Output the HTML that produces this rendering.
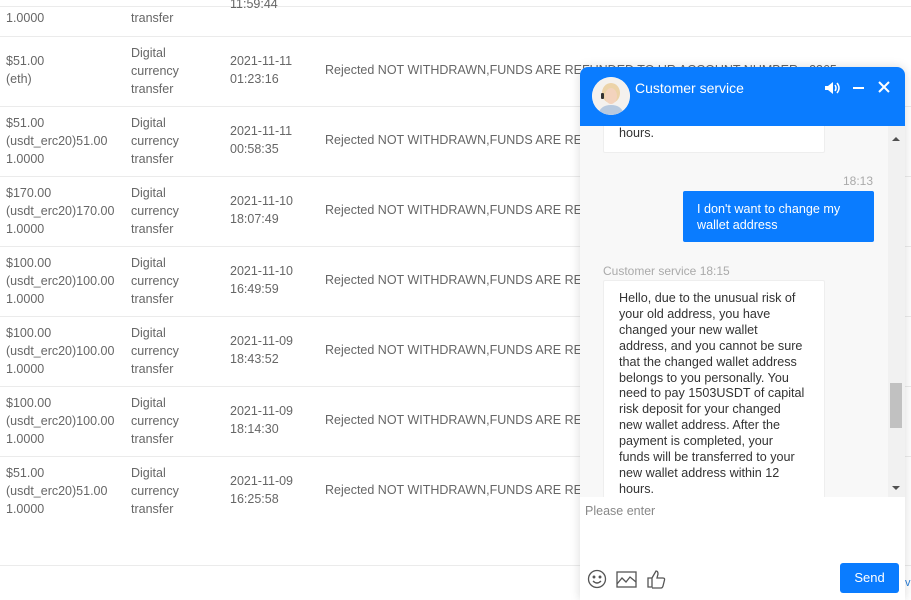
<!DOCTYPE html>
<html><head><meta charset="utf-8"><style>
*{margin:0;padding:0;box-sizing:border-box}
body{width:911px;height:600px;overflow:hidden;background:#fff;font-family:"Liberation Sans",sans-serif;font-size:12.5px;color:#666;position:relative}
.hl{position:absolute;left:0;width:911px;height:1px;background:#ebebeb}
.c{position:absolute;line-height:18px;color:#666;white-space:nowrap}
.chat{position:absolute;left:580px;top:67px;width:325px;height:533px;background:#fff;border-radius:8px 8px 0 0;box-shadow:0 0 10px rgba(0,0,0,.15);overflow:hidden}
.hd{position:absolute;left:0;top:0;width:325px;height:59px;background:#0a7cff}
.body{position:absolute;left:0;top:59px;width:325px;height:371px;background:#f8f8f8;overflow:hidden}
.msg{position:absolute;background:#fff;border:1px solid #eee;border-radius:2px;color:#333;font-size:12.6px;line-height:15.9px;white-space:nowrap}
</style></head><body>
<div class="hl" style="top:6px"></div>
<div class="hl" style="top:36px"></div>
<div class="hl" style="top:106px"></div>
<div class="hl" style="top:176px"></div>
<div class="hl" style="top:246px"></div>
<div class="hl" style="top:316px"></div>
<div class="hl" style="top:386px"></div>
<div class="hl" style="top:456px"></div>
<div class="hl" style="top:565px"></div>

<div class="c" style="left:6px;top:9px">1.0000</div>
<div class="c" style="left:131px;top:9px">transfer</div>
<div class="c" style="left:230px;top:-5px">11:59:44</div>

<div class="c" style="left:6px;top:52px">$51.00<br>(eth)</div>
<div class="c" style="left:131px;top:44px">Digital<br>currency<br>transfer</div>
<div class="c" style="left:230px;top:52px">2021-11-11<br>01:23:16</div>
<div class="c" style="left:325px;top:61px">Rejected NOT WITHDRAWN,FUNDS ARE REFUNDED TO UR ACCOUNT NUMBER - 2365</div>

<div class="c" style="left:6px;top:114px">$51.00<br>(usdt_erc20)51.00<br>1.0000</div>
<div class="c" style="left:131px;top:114px">Digital<br>currency<br>transfer</div>
<div class="c" style="left:230px;top:122px">2021-11-11<br>00:58:35</div>
<div class="c" style="left:325px;top:131px">Rejected NOT WITHDRAWN,FUNDS ARE RE</div>

<div class="c" style="left:6px;top:184px">$170.00<br>(usdt_erc20)170.00<br>1.0000</div>
<div class="c" style="left:131px;top:184px">Digital<br>currency<br>transfer</div>
<div class="c" style="left:230px;top:192px">2021-11-10<br>18:07:49</div>
<div class="c" style="left:325px;top:201px">Rejected NOT WITHDRAWN,FUNDS ARE RE</div>

<div class="c" style="left:6px;top:254px">$100.00<br>(usdt_erc20)100.00<br>1.0000</div>
<div class="c" style="left:131px;top:254px">Digital<br>currency<br>transfer</div>
<div class="c" style="left:230px;top:262px">2021-11-10<br>16:49:59</div>
<div class="c" style="left:325px;top:271px">Rejected NOT WITHDRAWN,FUNDS ARE RE</div>

<div class="c" style="left:6px;top:324px">$100.00<br>(usdt_erc20)100.00<br>1.0000</div>
<div class="c" style="left:131px;top:324px">Digital<br>currency<br>transfer</div>
<div class="c" style="left:230px;top:332px">2021-11-09<br>18:43:52</div>
<div class="c" style="left:325px;top:341px">Rejected NOT WITHDRAWN,FUNDS ARE RE</div>

<div class="c" style="left:6px;top:394px">$100.00<br>(usdt_erc20)100.00<br>1.0000</div>
<div class="c" style="left:131px;top:394px">Digital<br>currency<br>transfer</div>
<div class="c" style="left:230px;top:402px">2021-11-09<br>18:14:30</div>
<div class="c" style="left:325px;top:411px">Rejected NOT WITHDRAWN,FUNDS ARE RE</div>

<div class="c" style="left:6px;top:464px">$51.00<br>(usdt_erc20)51.00<br>1.0000</div>
<div class="c" style="left:131px;top:464px">Digital<br>currency<br>transfer</div>
<div class="c" style="left:230px;top:472px">2021-11-09<br>16:25:58</div>
<div class="c" style="left:325px;top:481px">Rejected NOT WITHDRAWN,FUNDS ARE RE</div>

<div class="c" style="left:905px;top:574px;color:#2a7fd8;font-size:11px">v</div>

<div class="chat">
 <div class="hd">
  <div style="position:absolute;left:12px;top:10px;width:38px;height:38px;border-radius:50%;background:#fff;overflow:hidden">
   <svg width="38" height="38" viewBox="0 0 38 38"><circle cx="19" cy="19" r="19" fill="#f4f1ee"/><ellipse cx="19" cy="16" rx="9" ry="10" fill="#ecd3a8"/><ellipse cx="19" cy="19" rx="6" ry="8" fill="#f3d3bd"/><path d="M6 38 Q8 28 19 28 Q30 28 32 38Z" fill="#b7c9df"/><rect x="9" y="16" width="3" height="6" rx="1" fill="#333"/></svg>
  </div>
  <div style="position:absolute;left:55px;top:13px;color:#fff;font-size:14px">Customer service</div>
  <svg style="position:absolute;left:244px;top:14px" width="18" height="14" viewBox="0 0 18 14"><path d="M1 5h3l5-4v12l-5-4H1z" fill="#fff"/><path d="M11 4q2 3 0 6M13 2q4 5 0 10" stroke="#fff" stroke-width="1.5" fill="none"/></svg>
  <div style="position:absolute;left:273px;top:20px;width:11px;height:2px;background:#fff"></div>
  <svg style="position:absolute;left:298px;top:14px" width="12" height="12"><path d="M1 1L11 11M11 1L1 11" stroke="#fff" stroke-width="2"/></svg>
 </div>
 <div class="body">
  <div class="msg" style="left:23px;top:-20px;width:222px;height:47px;padding:3px 0 0 15px"><br>hours.</div>
  <div style="position:absolute;left:263px;top:48px;color:#aaa;font-size:12px">18:13</div>
  <div style="position:absolute;left:103px;top:65px;width:191px;height:51px;background:#0a7cff;border-radius:2px;color:#fff;font-size:12.6px;line-height:16px;padding:10px 14px;white-space:nowrap">I don't want to change my<br>wallet address</div>
  <div style="position:absolute;left:23px;top:138px;color:#aaa;font-size:12px">Customer service 18:15</div>
  <div class="msg" style="left:23px;top:154px;width:222px;height:230px;padding:10px 0 0 15px">Hello, due to the unusual risk of<br>your old address, you have<br>changed your new wallet<br>address, and you cannot be sure<br>that the changed wallet address<br>belongs to you personally. You<br>need to pay 1503USDT of capital<br>risk deposit for your changed<br>new wallet address. After the<br>payment is completed, your<br>funds will be transferred to your<br>new wallet address within 12<br>hours.</div>
  <div style="position:absolute;left:308px;top:0;width:17px;height:371px;background:#f1f1f1"></div>
  <div style="position:absolute;left:310px;top:257px;width:12px;height:45px;background:#c1c1c1"></div>
  <div style="position:absolute;left:312px;top:11px;width:0;height:0;border-left:4px solid transparent;border-right:4px solid transparent;border-bottom:4px solid #505050"></div>
  <div style="position:absolute;left:312px;top:360px;width:0;height:0;border-left:4px solid transparent;border-right:4px solid transparent;border-top:4px solid #505050"></div>
 </div>
 <div style="position:absolute;left:5px;top:437px;color:#888;font-size:12.5px">Please enter</div>
 <svg style="position:absolute;left:7px;top:502px" width="80" height="20" viewBox="0 0 80 20" fill="none" stroke="#555" stroke-width="1.3">
  <circle cx="10" cy="10" r="8.5"/><circle cx="7" cy="8" r=".8" fill="#555"/><circle cx="13" cy="8" r=".8" fill="#555"/><path d="M6 12q4 4 8 0"/>
  <rect x="30" y="3" width="19" height="15"/><path d="M30 15l5-6 4 4 4-5 6 5"/>
  <path d="M61 9h4v9h-4zM65 9l4-7q2 0 2 3l-1 4h6q2 0 1.5 2l-1.5 6q-.5 2-2 2H65"/>
 </svg>
 <div style="position:absolute;left:260px;top:496px;width:59px;height:30px;background:#0a7cff;border-radius:3px;color:#fff;font-size:13px;text-align:center;line-height:30px">Send</div>
</div>
</body></html>
